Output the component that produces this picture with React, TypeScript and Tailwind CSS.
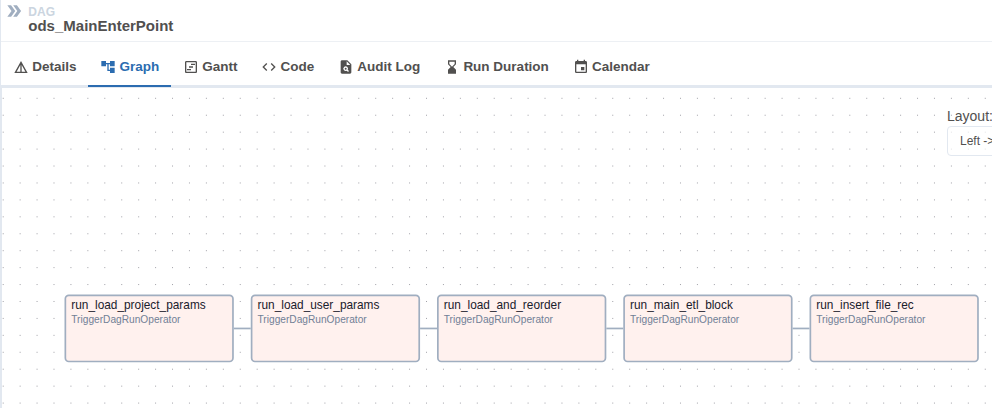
import type { ReactNode } from "react";
import {
  MdDetails,
  MdAccountTree,
  MdOutlineViewTimeline,
  MdCode,
  MdPlagiarism,
  MdHourglassBottom,
  MdEvent,
  MdDoubleArrow,
} from "react-icons/md";

function Tab({ icon, label, active }: { icon: ReactNode; label: string; active?: boolean }) {
  return (
    <button
      className={
        "flex h-[41px] shrink-0 items-center gap-[3.2px] border-b-2 pt-[3px] pr-[11.85px] pl-[12px] text-[13.5px] leading-[20px] font-bold whitespace-nowrap " +
        (active ? "border-[#2b6cb0] text-[#2b6cb0]" : "border-transparent text-[#51504f]")
      }
    >
      {icon}
      {label}
    </button>
  );
}

const tasks = [
  "run_load_project_params",
  "run_load_user_params",
  "run_load_and_reorder",
  "run_main_etl_block",
  "run_insert_file_rec",
];

function Graph() {
  return (
    <div className="relative flex-1 overflow-hidden">
      <svg className="absolute inset-0 h-full w-full">
        <defs>
          <pattern id="dots" x="0.7" y="9.8" width="16.932" height="16.932" patternUnits="userSpaceOnUse">
            <circle cx="0.5" cy="0.5" r="0.5" fill="#81818a" />
          </pattern>
        </defs>
        <rect width="100%" height="100%" fill="url(#dots)" />
      </svg>
      <div className="absolute top-[206px] left-[62px] flex origin-top-left translate-x-[0.5px] translate-y-[0.6px] scale-[0.8466] items-center">
        {tasks.map((name, i) => (
          <div key={name} className="flex items-center">
            {i > 0 && <div className="h-[2px] w-[20px] bg-[#a0aec0]" />}
            <div className="h-[80px] w-[200px] rounded-[5px] border-2 border-[#a0aec0] bg-[#fff1ee] px-[6px]">
              <div className="text-[14px] leading-[20px] text-[#1a202c]">{name}</div>
              <div className="text-[12px] leading-[15px] text-[#718096]">TriggerDagRunOperator</div>
            </div>
          </div>
        ))}
      </div>
      <div className="absolute top-[19px] left-[945px] w-[200px] text-[#51504f]">
        <div className="mb-px text-[14px] leading-[18px]">Layout:</div>
        <div className="flex h-[30px] items-center rounded-[4px] border border-[#e2e8f0] bg-white/70 px-3 text-[12px]">
          Left -&gt; Right
        </div>
      </div>
    </div>
  );
}

export default function App() {
  return (
    <div className="flex h-[408px] w-[992px] flex-col overflow-hidden border-l border-[#e2e8f0] bg-white font-['Liberation_Sans',Arial,sans-serif]">
      <header className="flex h-[42px] shrink-0 gap-[4.3px] border-b border-[#edf0f4] pl-[3px]">
        <MdDoubleArrow className="mt-px text-[20px] text-[#a0aec0]" />
        <div className="pt-[5px] font-bold">
          <div className="text-[12px] leading-[14px] text-[#cbd5e0]">DAG</div>
          <div className="text-[15px] leading-[14px] text-[#51504f]">ods_MainEnterPoint</div>
        </div>
      </header>
      <nav className="flex h-[46px] shrink-0 items-end border-b-[3px] border-[#e2e8f0]">
        <div className="-mb-[2px] flex">
          <Tab icon={<MdDetails size={16} />} label="Details" />
          <Tab icon={<MdAccountTree size={16} />} label="Graph" active />
          <Tab icon={<MdOutlineViewTimeline size={16} />} label="Gantt" />
          <Tab icon={<MdCode size={16} />} label="Code" />
          <Tab icon={<MdPlagiarism size={16} />} label="Audit Log" />
          <Tab icon={<MdHourglassBottom size={16} />} label="Run Duration" />
          <Tab icon={<MdEvent size={16} />} label="Calendar" />
        </div>
      </nav>
      <main className="flex min-h-0 flex-1 border-l border-[#e2e8f0]">
        <Graph />
      </main>
    </div>
  );
}
